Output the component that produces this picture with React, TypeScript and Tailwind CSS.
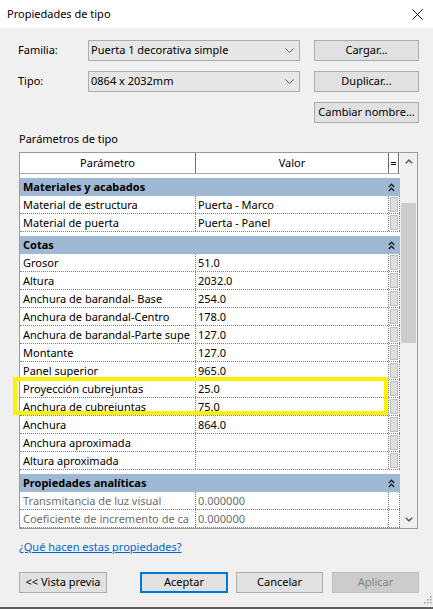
import React from 'react';

type Row = [string, string];

interface Group {
  name: string;
  muted?: boolean;
  rows: Row[];
}

// names as the cell shows them (the grid clips long names)
const groups: Group[] = [
  {
    name: 'Materiales y acabados',
    rows: [
      ['Material de estructura', 'Puerta - Marco'],
      ['Material de puerta', 'Puerta - Panel'],
    ],
  },
  {
    name: 'Cotas',
    rows: [
      ['Grosor', '51.0'],
      ['Altura', '2032.0'],
      ['Anchura de barandal- Base', '254.0'],
      ['Anchura de barandal-Centro', '178.0'],
      ['Anchura de barandal-Parte supe', '127.0'],
      ['Montante', '127.0'],
      ['Panel superior', '965.0'],
      ['Proyección cubrejuntas', '25.0'],
      ['Anchura de cubrejuntas', '75.0'],
      ['Anchura', '864.0'],
      ['Anchura aproximada', ''],
      ['Altura aproximada', ''],
    ],
  },
  {
    name: 'Propiedades analíticas',
    muted: true,
    rows: [
      ['Transmitancia de luz visual', '0.000000'],
      ['Coeficiente de incremento de ca', '0.000000'],
    ],
  },
];

const Chevron = () => (
  <svg width="9" height="5" viewBox="0 0 9 5" fill="none" stroke="#5a5a5a" strokeWidth="1">
    <path d="M0.5 0.5L4.5 4.5L8.5 0.5" />
  </svg>
);

const Collapse = () => (
  <svg width="7" height="9" viewBox="0 0 7 9" fill="none" stroke="#1a1a1a" strokeWidth="1.3">
    <path d="M0.8 4L3.5 1.2L6.2 4" />
    <path d="M0.8 8L3.5 5.2L6.2 8" />
  </svg>
);

function Button({ label, className = '' }: { label: string; className?: string }) {
  return (
    <div
      className={`h-[21px] flex items-center justify-center border border-[#adadad] bg-[#e1e1e1] text-black ${className}`}
    >
      {label}
    </div>
  );
}

function Combo({ value }: { value: string }) {
  return (
    <div className="w-[212px] h-[21px] flex items-center justify-between border border-[#adadad] bg-[#e7e7e7] pl-[2px] pr-[5px]">
      <span>{value}</span>
      <Chevron />
    </div>
  );
}

function DataRow({ row, muted }: { row: Row; muted?: boolean }) {
  return (
    <div className={`flex h-[18px] border-b border-dotted border-[#808080] ${muted ? 'text-[#6d6d6d]' : 'text-black'}`}>
      <div className="w-[176px] shrink-0 pl-[3px] border-r border-dotted border-[#808080] overflow-hidden whitespace-nowrap leading-[17px]">
        {row[0]}
      </div>
      <div className="w-[193px] shrink-0 pl-[2px] border-r border-dotted border-[#808080] overflow-hidden whitespace-nowrap leading-[17px]">
        {row[1]}
      </div>
      <div className="w-[11px] shrink-0 border-r border-dotted border-[#808080] px-[1px] py-[1px]">
        {!muted && <div className="h-full bg-[#dedede] border border-[#bdbdbd]" />}
      </div>
    </div>
  );
}

export default function App() {
  return (
    <div className="relative w-[433px] h-[609px] bg-[#f0f0f0] flex flex-col font-['Noto_Sans',sans-serif] text-[11px] text-black overflow-hidden">
      {/* Title bar */}
      <div className="h-[28px] shrink-0 bg-white flex items-center justify-between pl-[7px] pr-[10px]">
        <span className="text-[11px]">Propiedades de tipo</span>
        <svg width="11" height="11" viewBox="0 0 11 11" stroke="#111" strokeWidth="1">
          <path d="M0.5 0.5L10.5 10.5M10.5 0.5L0.5 10.5" />
        </svg>
      </div>

      {/* Familia / Tipo */}
      <div className="mt-[12px] flex items-center pl-[18px]">
        <span className="w-[70px]">Familia:</span>
        <Combo value="Puerta 1 decorativa simple" />
        <Button label="Cargar..." className="ml-[14px] w-[105px]" />
      </div>
      <div className="mt-[10px] flex items-center pl-[18px]">
        <span className="w-[70px]">Tipo:</span>
        <Combo value="0864 x 2032mm" />
        <Button label="Duplicar..." className="ml-[14px] w-[105px]" />
      </div>
      <div className="mt-[10px] flex justify-end pr-[14px]">
        <Button label="Cambiar nombre..." className="w-[105px]" />
      </div>

      <div className="mt-[8px] pl-[19px] leading-[16px]">Parámetros de tipo</div>

      {/* Property grid */}
      <div className="mt-[5px] ml-[19px] w-[399px] border border-[#9a9a9a] bg-white flex">
        <div className="w-[380px] shrink-0 flex flex-col">
          <div className="flex h-[21px] border-b border-[#a8a8a8] bg-white">
            <div className="w-[176px] shrink-0 border-r border-[#6b6b6b] flex items-center justify-center">Parámetro</div>
            <div className="w-[193px] shrink-0 border-r border-[#6b6b6b] flex items-center justify-center">Valor</div>
            <div className="w-[10px] shrink-0 border-r border-[#6b6b6b] flex items-center justify-center">=</div>
          </div>
          {groups.map((g) => (
            <div key={g.name} className="flex flex-col">
              <div className="h-[22px] pt-[4px] bg-white">
                <div className="h-[18px] bg-[#9fb8d4] flex items-center justify-between pl-[3px] pr-[5px]">
                  <span className="font-bold">{g.name}</span>
                  <Collapse />
                </div>
              </div>
              {g.rows.map((r) => (
                <DataRow key={r[0]} row={r} muted={g.muted} />
              ))}
            </div>
          ))}
        </div>
        {/* Scrollbar */}
        <div className="w-[17px] shrink-0 bg-[#f0f0f0] flex flex-col">
          <div className="h-[17px] flex items-center justify-center">
            <svg width="8" height="5" viewBox="0 0 8 5" fill="none" stroke="#606060" strokeWidth="1.5">
              <path d="M0.8 4.3L4 1.1L7.2 4.3" />
            </svg>
          </div>
          <div className="h-[33px]" />
          <div className="h-[140px] mx-[1px] bg-[#cdcdcd]" />
          <div className="flex-1" />
          <div className="h-[17px] flex items-center justify-center">
            <svg width="8" height="5" viewBox="0 0 8 5" fill="none" stroke="#606060" strokeWidth="1.5">
              <path d="M0.8 0.7L4 3.9L7.2 0.7" />
            </svg>
          </div>
        </div>
      </div>

      <div className="mt-[10px] pl-[19px] leading-[16px]">
        <span className="text-[#0066cc] underline">¿Qué hacen estas propiedades?</span>
      </div>

      <div className="mt-[17px] flex pl-[19px]">
        <Button label="<< Vista previa" className="w-[88px]" />
        <div className="ml-[33px] w-[88px] h-[21px] flex items-center justify-center border-2 border-[#0078d7] bg-[#e1e1e1]">
          Aceptar
        </div>
        <Button label="Cancelar" className="ml-[8px] w-[87px]" />
        <div className="ml-[9px] w-[87px] h-[21px] flex items-center justify-center border border-[#bfbfbf] bg-[#cccccc] text-[#838383]">
          Aplicar
        </div>
      </div>

      <div className="flex-1 flex justify-end items-end pr-[1px] pb-[3px]">
        <svg width="9" height="9" viewBox="0 0 9 9" fill="#a0a0a0">
          <rect x="7" y="1" width="1.5" height="1.5" />
          <rect x="4" y="4" width="1.5" height="1.5" />
          <rect x="7" y="4" width="1.5" height="1.5" />
          <rect x="1" y="7" width="1.5" height="1.5" />
          <rect x="4" y="7" width="1.5" height="1.5" />
          <rect x="7" y="7" width="1.5" height="1.5" />
        </svg>
      </div>
      <div className="h-[2px] shrink-0 bg-[#5e5e5e]" />

      {/* Yellow highlight annotation */}
      <div className="absolute left-[13px] top-[377px] w-[375px] h-[38px] border-4 border-[#fff200] pointer-events-none" />
    </div>
  );
}
